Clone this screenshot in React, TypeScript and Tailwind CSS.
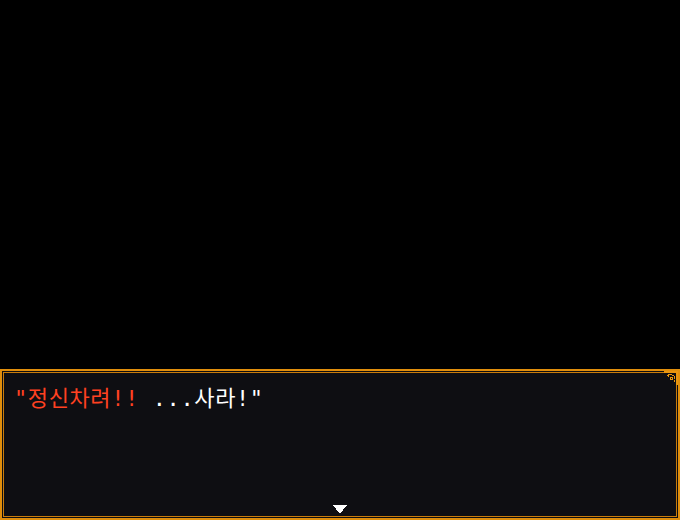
import React from "react";

const Corner = () => (
  <svg
    width="14"
    height="14"
    viewBox="0 0 14 14"
    className="absolute right-0 top-0"
    shapeRendering="crispEdges"
  >
    <path d="M0 0h14v14h-2V2H0z" fill="#e8950f" />
    <path d="M4 3h4v1H5v2H4zM8 4h2v1h1v3h-1V5H8zM6 6h3v3H6zM10 9h1v2h-1zM3 4h1v1H3z" fill="#e8950f" />
    <path d="M7 7h1v1H7z" fill="#0e0e11" />
  </svg>
);

const DialogBox = () => (
  <div className="relative h-[151px] border-2 border-[#e08e0c] bg-[#0e0e11] p-px">
    <div className="flex h-full flex-col border border-[#c97c0b] bg-[#0e0e12] px-[10px] pt-[12px]">
      <p
        className="text-[22px] leading-[28px] tracking-[0.6px]"
        style={{ fontFamily: '"DejaVu Sans Mono", "Noto Sans CJK KR", monospace' }}
      >
        <span className="text-[#ff4121]">"정신차려!!</span>
        <span className="text-white"> ...사라!"</span>
      </p>
      <div className="mt-auto flex justify-center pb-[2px]">
        <svg width="14" height="9" viewBox="0 0 14 9" shapeRendering="crispEdges">
          <path d="M0 0h14L7 9z" fill="#ffffff" />
        </svg>
      </div>
    </div>
    <Corner />
  </div>
);

export default function App() {
  return (
    <div className="flex h-[520px] w-[680px] flex-col bg-black">
      <div className="flex-1" />
      <DialogBox />
    </div>
  );
}
